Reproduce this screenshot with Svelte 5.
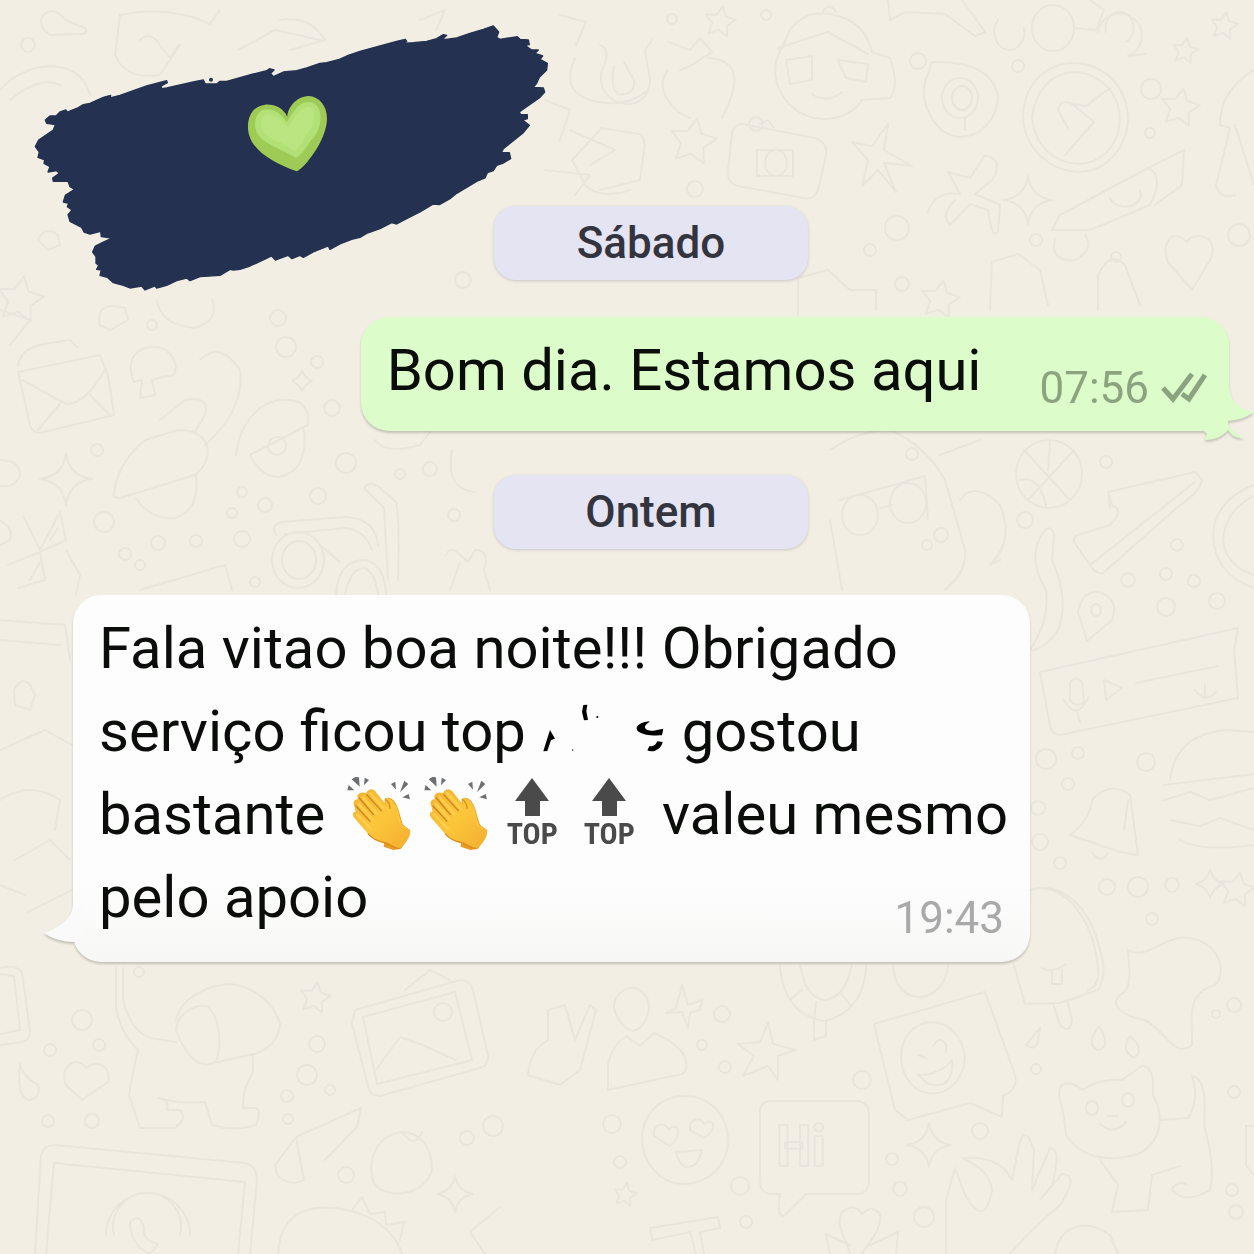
<script>
  const bubbles = [
    [82, 1020, 10], [50, 1050, 6], [99, 1045, 6], [48, 1121, 6], [92, 1121, 7], [287, 1096, 6], [307, 1075, 10],
    [330, 1090, 5], [288, 1119, 5], [346, 1175, 8], [467, 1138, 7], [493, 1126, 10], [317, 1044, 8], [139, 972, 5],
    [722, 1014, 8], [702, 1045, 5], [725, 1067, 6], [862, 1080, 9], [612, 1124, 9], [620, 1162, 6], [740, 1186, 9],
    [892, 1159, 6], [900, 1189, 7], [980, 1131, 8], [924, 1217, 10], [746, 1222, 6], [1216, 1014, 4], [1234, 1005, 7],
    [1036, 1069, 5], [1234, 1092, 6], [1232, 1190, 6], [1236, 1212, 7], [1152, 919, 6], [1138, 887, 10], [1107, 887, 8],
    [1046, 759, 10], [1078, 753, 6], [1146, 762, 9], [1068, 784, 6], [1038, 808, 7], [1040, 842, 8], [1060, 863, 6],
    [1172, 885, 7], [1106, 462, 6], [1025, 520, 8], [1177, 545, 6], [1128, 580, 7], [1166, 574, 6], [1194, 581, 6],
    [1166, 607, 9], [1217, 601, 8], [941, 535, 7], [927, 545, 5], [912, 454, 6], [104, 522, 10], [125, 554, 6],
    [158, 543, 7], [196, 541, 6], [242, 539, 8], [265, 505, 7], [232, 513, 5], [318, 496, 8], [346, 463, 10],
    [332, 408, 8], [317, 362, 6], [430, 469, 7], [400, 474, 5], [454, 515, 6], [97, 450, 6], [278, 318, 8],
    [152, 325, 5], [242, 492, 5], [286, 347, 10], [918, 61, 8], [1018, 66, 6], [1151, 89, 10], [756, 124, 7],
    [672, 19, 5], [766, 15, 5], [897, 228, 12], [1239, 235, 11], [1036, 240, 6], [1116, 257, 5], [902, 284, 7],
    [870, 250, 6], [1150, 133, 5], [463, 280, 8], [28, 45, 7], [695, 189, 8], [140, 565, 5], [255, 582, 5],
  ];

  const stars = [
    [315, 998, 16], [1237, 890, 18], [720, 22, 16], [1224, 26, 14], [1185, 51, 13], [1180, 108, 20], [693, 142, 24],
    [793, 245, 15], [625, 1195, 12], [20, 300, 24], [940, 300, 20],
  ];

  const sparkles = [
    [66, 479, 26], [1028, 200, 24], [929, 1145, 22], [455, 1194, 18], [1210, 884, 14], [302, 381, 10],
  ];

  const doodles = [
    // elephant
    "M116 968V1005Q118 1030 138 1050Q132 1075 129 1095L140 1128H175Q188 1118 180 1110L167 1110Q170 1100 158 1098M158 1098Q180 1104 205 1102L212 1125Q235 1132 256 1125Q262 1112 256 1108L243 1108Q242 1090 253 1072V1055M123 968V1000Q130 1030 150 1038L176 1042M176 1020C180 1000 205 985 230 984C255 986 275 1005 280 1024C278 1045 262 1052 254 1054L218 1062M176 1030C178 1012 195 1004 207 1006C220 1016 222 1045 216 1062C200 1070 186 1058 176 1030",
    // picture frame
    "M355 1010L460 980Q470 980 473 990L488 1056Q488 1066 480 1068L380 1096Q370 1096 368 1086L352 1024ZM363 1017L455 992L472 1060L377 1084ZM376 1070L400 1037L420 1044L456 1060M434 1012a9 9 0 1 0 18 0a9 9 0 1 0-18 0M405 990L430 970L450 980",
    // monitor with a phone badge
    "M35 1254L41 1155Q44 1145 55 1145L245 1163Q257 1166 257 1180L250 1254M46 1254L54 1163L245 1182L238 1254M106 1235a42 42 0 1 1 84 0M114 1235a34 34 0 1 1 66 0M130 1222Q140 1212 144 1228Q142 1240 158 1244L150 1254Q130 1245 130 1222",
    "M0 968Q15 964 22 972L30 1032Q30 1040 22 1042L0 1045M0 974L14 976L20 1030L0 1034M20 1064Q22 1076 38 1085Q42 1096 30 1100Q16 1098 20 1064",
    // heart, peach, dinosaur
    "M82 1100L66 1085C58 1065 78 1055 86 1068C98 1058 112 1068 108 1082Z",
    "M402 1132C375 1135 365 1165 375 1185C390 1200 425 1195 432 1170C432 1145 418 1132 402 1132Q415 1150 422 1132",
    "M278 1254C280 1215 305 1205 335 1208C370 1212 395 1230 402 1254M352 1210L362 1197L370 1214L385 1212L386 1225L404 1222L400 1240M500 1207L470 1232L485 1254",
    "M275 1165L296 1137L361 1108L357 1127L325 1160M296 1137L304 1180Q290 1188 277 1175L275 1165",
    // balloon, cross and dove
    "M614 1005C618 985 640 982 648 1000C652 1018 640 1030 633 1031C622 1028 614 1015 614 1005ZM676 1008L682 985L688 1005L702 1000L700 1010L690 1013L688 1028L682 1012L666 1013Z",
    "M608 1090L608 1064Q612 1045 626 1036L640 1046L654 1033Q690 1048 686 1070L682 1074ZM548 1010V1040Q530 1050 528 1075L560 1085L580 1070L596 1010L590 1005L575 1040L565 1005Z",
    // starfish
    "M768 1023L773 1044L796 1050L778 1056L778 1080L768 1066L743 1076L754 1056L738 1044L760 1042Z",
    "M888 124L884 150L912 166L884 163L896 192L878 170L862 186L868 160L852 142L872 146Z",
    // life ring
    "M780 965C782 1000 800 1018 825 1021C850 1015 866 995 866 965M800 965C804 985 810 998 825 1000C840 998 848 985 852 965M790 1000L802 990M814 1021L816 1002M850 1005L840 992M814 1021V1040L826 1036V1021",
    "M893 965C895 1010 945 1005 948 965",
    // emoji cards
    "M874 1024L985 992L1015 1075Q1018 1090 1003 1096L1002 1117L970 1103L908 1120L895 1110ZM901 1059C900 1010 962 1010 965 1059C960 1105 905 1105 901 1059ZM918 1055L926 1058M934 1045Q940 1035 946 1045V1052M918 1075Q940 1075 952 1060Q954 1090 928 1084Z",
    "M642 1139C642 1115 660 1096 684 1096C710 1096 728 1115 728 1141C728 1165 708 1184 684 1184C660 1184 642 1162 642 1139ZM670 1146L654 1136C652 1122 668 1122 668 1130C678 1120 684 1134 670 1146ZM704 1138L690 1130C688 1118 702 1116 704 1124C714 1116 718 1130 704 1138ZM676 1152L702 1150Q698 1168 686 1167Q678 1164 676 1152Z",
    // speech balloon
    "M770 1101H858Q869 1103 869 1114V1182Q868 1194 856 1194H806Q796 1204 784 1216Q776 1216 780 1194H770Q760 1192 760 1182V1112Q760 1102 770 1101Z",
    // ice lolly
    "M1030 890C1060 880 1090 905 1100 950Q1108 975 1098 990L1060 1003L1025 1004L1014 965M1040 888C1075 890 1095 930 1098 970Q1100 985 1088 990M1053 1003L1060 1025Q1070 1035 1072 1020L1067 1000M1042 968Q1052 974 1066 964M1052 972V984H1062V970",
    // puddle
    "M1128 950C1145 960 1160 940 1180 938C1215 935 1230 970 1215 985C1195 990 1190 1005 1192 1025V1045C1175 1060 1165 1030 1145 1020C1120 1015 1110 1005 1120 995C1132 990 1130 970 1128 950Z",
    "M1040 1028L1026 1045Q1036 1052 1038 1040ZM1099 1026Q1085 1045 1098 1050Q1112 1048 1099 1026ZM1130 1036Q1120 1050 1134 1058Q1146 1050 1130 1036Z",
    // cat
    "M1060 1100C1055 1080 1072 1080 1082 1090Q1100 1078 1122 1080L1142 1066Q1155 1066 1153 1095C1165 1115 1162 1145 1135 1155C1110 1162 1080 1158 1066 1135Q1064 1112 1060 1100ZM1086 1108a6 7 0 1 0 12 0a6 7 0 1 0-12 0M1122 1100a6 7 0 1 0 12 0a6 7 0 1 0-12 0M1100 1124Q1114 1136 1126 1122M1108 1116H1118M1162 1120L1188 1118Q1200 1100 1192 1076Q1208 1078 1204 1125Q1216 1170 1210 1190Q1185 1205 1172 1190Q1176 1180 1186 1184M1100 1160L1118 1185L1112 1212L1148 1210L1152 1175L1180 1166",
    // hand and plant
    "M946 1254V1200L955 1168L965 1195Q985 1230 992 1190Q990 1170 962 1158Q1000 1155 1012 1180L1018 1150Q1024 1120 1034 1150L1032 1190L1050 1148Q1062 1148 1052 1185L1040 1200L1062 1174Q1080 1175 1060 1205Q1030 1230 1010 1254",
    "M850 1254C845 1235 835 1225 842 1212Q855 1202 862 1214Q872 1204 880 1214C882 1230 870 1240 862 1254M830 1254L826 1234L850 1245M870 1245L898 1232L896 1254M1055 1254C1060 1225 1085 1218 1110 1235L1118 1254M650 1228L718 1217L720 1228L700 1232L704 1254M650 1228L652 1240L690 1232L696 1254",
    "M1246 1126H1254M1246 1126V1165L1254 1175",
    // santa and teddy
    "M778 56L790 30Q805 10 830 14Q865 20 872 52L890 58Q900 85 890 98L862 100C850 120 815 128 790 105C775 90 772 70 778 56ZM778 48L828 32L868 54M786 60L812 56V80L790 84ZM838 60L868 64L866 82L846 78ZM812 94Q828 104 842 92M822 14Q828 0 836 12",
    "M600 45Q612 50 602 70C592 105 648 120 650 80L645 50L652 40M614 66Q610 88 618 94Q636 96 634 80L624 62M668 42L690 50L700 38L712 52L690 66L680 70M668 70C655 85 668 110 690 118M708 58Q745 60 730 100L722 118",
    // camera
    "M742 124L815 138Q828 142 826 155L818 190Q814 200 804 198L738 186Q726 182 728 170L732 132Q735 124 742 124ZM757 150H793V176H757ZM765 163a11 13 0 1 0 22 0a11 13 0 1 0-22 0M760 124L768 120L774 128",
    "M600 128L640 134Q646 138 644 150L640 180L600 190M570 130L615 150L590 165",
    // donut
    "M932 62Q990 60 998 95C998 120 980 137 960 137C935 135 920 105 925 82ZM942 98a18 20 0 1 0 36 0a18 20 0 1 0-36 0M952 98a10 12 0 1 0 20 0a10 12 0 1 0-20 0M965 118V130",
    // clock
    "M1023 118C1023 85 1045 63 1075 63C1108 65 1128 90 1128 120C1126 150 1105 172 1078 172C1048 170 1025 148 1023 118ZM1032 118C1035 90 1052 72 1076 72C1102 74 1120 95 1120 120C1118 148 1100 164 1077 164C1052 162 1035 145 1032 118ZM1058 110Q1060 98 1072 104L1086 106L1110 88M1072 104L1094 122L1065 155M1058 110L1068 128",
    // binoculars and snail
    "M998 20a15 18 0 1 0 26 8M1032 28a20 22 0 1 0 42 0a20 22 0 1 0-42 0M1074 28L1096 30L1104 10L1090 0M1098 32a22 22 0 1 1 30 24L1145 54M1106 32a14 16 0 1 1 20 10M888 0L890 20L905 12L945 14L975 36L985 32L962 0",
    // palm and rocket
    "M928 212Q935 190 960 194L948 172L970 178L985 155Q1005 160 992 180L975 194L1000 205L998 232Q992 240 988 210L970 204L950 225Q940 215 955 200",
    "M1052 230L1060 215L1148 168Q1165 175 1150 205L1090 230ZM1148 168L1184 150L1182 185L1155 205M1110 198a15 12 0 1 0 30-8M1055 240Q1050 262 1075 260Q1095 250 1085 235",
    "M1254 70Q1220 90 1220 125L1230 128L1216 185Q1220 200 1235 195M1235 125L1254 185M1192 290L1168 262C1160 240 1175 228 1186 242C1200 228 1220 240 1210 260Z",
    "M990 310L992 262L1018 254L1040 270L1048 305M1098 310V275Q1110 250 1125 265L1140 305M798 315V278L828 270L850 290H876V310",
    // upper left doodles
    "M42 16Q55 5 65 20L85 28Q90 35 76 34L50 35Q38 28 42 16ZM120 15Q170 5 210 24L220 10M120 15L115 55Q125 80 160 75L180 45M140 40Q150 30 160 45L170 58L178 45M0 90C25 60 80 55 90 95M10 100Q40 75 60 85",
    "M280 20Q310 15 325 40L290 50M238 50L275 30L320 40M420 20L445 10L436 30M560 15L586 22L576 45M545 100L570 110L560 140M545 170L590 175L575 195",
    "M575 58Q560 90 590 100Q625 110 648 90M600 130L572 160L585 185Q600 200 630 190",
    "M38 240Q45 225 58 235L60 245L48 250ZM0 310L30 320L10 345M100 325Q95 300 125 308L128 320L110 330ZM157 300Q160 325 195 328Q220 320 212 300",
    // envelope
    "M18 366Q20 348 45 344L70 340L78 348M18 372L100 355L108 375L114 415L40 433Q32 432 30 425ZM22 380L66 404Q85 405 106 368M38 430L60 404M110 415L90 395",
    // mushroom
    "M134 382Q125 360 140 350Q165 340 175 362Q178 378 166 376L152 380L155 395L140 398L142 380Z",
    // planets and lamps
    "M114 493Q118 462 145 440L178 430Q205 430 208 450Q208 465 195 475L120 498Q112 498 114 493ZM136 498Q150 520 175 518Q200 510 196 476M160 420L185 400Q210 395 205 415L195 432M200 360Q220 340 240 370Q245 410 205 445M236 455C240 420 262 398 290 400Q310 402 308 425L250 455Q262 478 280 477Q308 470 304 430M268 446a9 9 0 1 0 18 0a9 9 0 1 0-18 0",
    // scissors
    "M24 517L40 550L60 512M60 512L66 540L40 552L8 565M40 552L45 580L18 588M50 540L58 528M30 580L40 562M66 550L80 575L76 595M0 460Q20 460 20 475Q16 488 0 486M0 521Q14 528 10 540L0 545",
    // goggles
    "M276 535Q270 525 282 522L345 517Q375 518 378 545M285 534L345 528Q365 530 372 550M272 560a26 28 0 1 0 52 0a26 28 0 1 0-52 0M282 560a17 19 0 1 0 34 0a17 19 0 1 0-34 0M320 545L340 562M336 595Q338 560 365 560Q385 564 386 595M345 595Q350 568 365 568Q376 574 378 595M364 488Q370 480 380 488L396 502Q400 520 398 580M364 488L384 508L388 580",
    "M140 590L225 565L232 590M375 440Q385 455 420 445L430 432M452 450Q445 490 475 492M446 555Q450 545 460 555L468 562L475 550Q490 550 484 570L490 590M460 562L450 590",
    // animal with glasses
    "M830 450Q860 430 890 430Q925 445 945 480L965 550Q968 570 945 590M840 500L925 476L928 520M842 515a18 20 0 1 0 36 0a18 20 0 1 0-36 0M890 503a18 20 0 1 0 36 0a18 20 0 1 0-36 0M880 508L892 505M830 520L842 590M940 455L980 440M960 500Q975 480 1000 505Q1015 540 990 565L1000 560",
    // basketball
    "M1016 474a33 34 0 1 0 66 0a33 34 0 1 0-66 0M1024 450L1070 500M1028 500L1074 450M1050 442L1048 470M1020 480Q1040 475 1046 506",
    // shoe
    "M1108 492L1195 472L1202 480Q1200 492 1180 505L1103 573Q1096 575 1090 565L1074 542Q1072 535 1085 533L1110 525Q1125 510 1112 505ZM1090 565L1195 482M1108 492L1110 508",
    "M1254 485Q1215 500 1213 535Q1215 575 1254 588M1254 496Q1225 510 1223 540Q1225 565 1254 575M1045 530Q1052 525 1054 535L1052 560Q1070 600 1058 630Q1045 650 1030 650Q1050 620 1046 590Q1025 555 1045 530ZM1087 641L1078 612Q1082 590 1100 592Q1120 600 1112 620ZM1091 610a5 6 0 1 0 10 0a5 6 0 1 0-10 0",
    // voice message
    "M1040 672L1238 628L1234 650L1238 698L1060 735Q1052 735 1050 725ZM1070 682Q1076 675 1082 682L1084 702Q1076 708 1070 700ZM1064 700Q1076 722 1088 698M1077 712L1080 722M1104 680L1122 688L1106 700ZM1136 683L1218 666M1205 684V698M1195 690Q1205 704 1216 692",
    // burger and bell
    "M1170 780Q1175 735 1225 730L1254 732M1164 785L1254 774M1164 800L1190 792L1210 800L1254 788M1170 820L1200 826L1220 818L1254 830M1180 840Q1200 852 1254 845M1070 835Q1090 820 1092 800Q1110 780 1130 795L1138 855L1120 852ZM1092 852Q1100 865 1108 853M1128 800L1124 830",
    // left column
    "M0 620L65 625L70 660M0 640L60 645M14 690Q25 670 35 695L30 710L15 705ZM0 750L45 730L72 745M0 800Q30 780 60 800L55 830M15 860L50 840L70 860M0 885L25 895M28 912L72 890",
  ];

  function starPath([x, y, r]) {
    const points = [];
    for (let i = 0; i < 10; i++) {
      const radius = i % 2 ? r * 0.5 : r;
      const angle = (i * Math.PI) / 5 - 1.4;
      points.push(`${(x + radius * Math.cos(angle)).toFixed(1)} ${(y + radius * Math.sin(angle)).toFixed(1)}`);
    }
    return `M${points.join("L")}Z`;
  }

  function sparklePath([x, y, r]) {
    return `M${x} ${y - r}Q${x + 3} ${y - 3} ${x + r} ${y}Q${x + 3} ${y + 3} ${x} ${y + r}Q${x - 3} ${y + 3} ${x - r} ${y}Q${x - 3} ${y - 3} ${x} ${y - r}Z`;
  }
</script>

{#snippet clap()}
  <svg class="emoji" viewBox="14 252 231 222" role="img" aria-label="👏">
    <defs>
      <linearGradient id="skin" x1="0" y1="0" x2="1" y2="1">
        <stop offset="0" stop-color="#f3b233" />
        <stop offset="0.5" stop-color="#fcc63a" />
        <stop offset="1" stop-color="#f3ad30" />
      </linearGradient>
    </defs>
    <g fill="#6d6f72">
      <path d="M36 295L40 279L57 295ZM49 262L60 255L71 256L73 284ZM88 257L101 264L86 280ZM167 276L180 269L182 293ZM207 266L219 276L194 301ZM201 316L220 306L224 322Z" />
    </g>
    <path
      d="M148 322C158 313 171 318 181 334C192 354 196 380 203 398L224 415L222 432L197 470L174 474L145 464L148 440Z"
      fill="#e99a22"
    />
    <path
      d="M149 320C160 314 172 322 182 340C192 360 193 383 201 400L216 408L200 436L160 400Z"
      fill="#fbc53a"
    />
    <path
      d="M66 311C72 300 84 300 92 304C99 289 112 288 120 298L157 344C163 345 160 330 151 320C166 316 176 341 180 356C186 374 191 390 197 403L225 414C224 438 210 457 193 470C175 470 164 456 151 453C132 450 112 442 98 425L58 379C50 368 52 358 61 359L58 344C50 333 58 320 67 322Z"
      fill="url(#skin)"
    />
    <path
      d="M105 304L148 352M82 316L126 366M70 336L112 382M66 368L106 410"
      fill="none"
      stroke="#ffce4a"
      stroke-width="8"
      stroke-linecap="round"
    />
    <path
      d="M94 308L138 356M72 318L114 368M62 342L104 388"
      fill="none"
      stroke="#c88420"
      stroke-width="4"
      stroke-linecap="round"
    />
    <path
      d="M98 425C112 442 132 450 151 453C164 456 175 470 193 470"
      fill="none"
      stroke="#dc8c1d"
      stroke-width="4"
    />
    <path d="M150 322Q164 333 164 350" fill="none" stroke="#d68b20" stroke-width="4" />
  </svg>
{/snippet}

{#snippet topArrow()}
  <span class="emoji top">
    <svg class="arrow" viewBox="0 0 34 38" aria-hidden="true">
      <path d="M17 0L34 23H25V38H10V23H0Z" />
    </svg>
    <span class="top-label">TOP</span>
  </span>
{/snippet}

<main class="chat">
  <svg class="wallpaper" viewBox="0 0 1254 1254" preserveAspectRatio="xMidYMid slice" aria-hidden="true">
    {#each doodles as d}
      <path {d} />
    {/each}
    {#each stars as star}
      <path d={starPath(star)} />
    {/each}
    {#each sparkles as sparkle}
      <path d={sparklePath(sparkle)} />
    {/each}
    {#each bubbles as [cx, cy, r]}
      <circle {cx} {cy} {r} />
    {/each}
    <text class="hi" x="776" y="1166">Hi</text>
  </svg>

  <svg class="brush" viewBox="0 0 1620 900" role="img" aria-label="💚">
    <path
      fill="#243150"
      stroke="#243150"
      stroke-width="4"
      stroke-linejoin="round"
      d="M76 330L90 318 108 318 120 306 138 300 142 306 175 293 190 284 210 280 250 262 272 256 270 264 300 256 380 228 440 212 442 218 424 228 424 236 440 234 520 216 550 210 556 222 590 222 600 214 620 214 700 192 740 182 748 176 762 180 752 190 760 200 790 186 830 182 860 174 900 160 920 158 958 148 980 138 1020 124 1080 108 1130 94 1156 88 1160 94 1146 100 1180 98 1220 94 1250 86 1270 74 1280 76 1266 90 1310 84 1350 70 1390 58 1420 48 1436 66 1430 82 1440 88 1492 80 1500 88 1525 90 1528 104 1515 106 1535 120 1555 120 1545 130 1568 138 1560 148 1582 160 1580 180 1558 202 1550 220 1540 232 1570 234 1574 246 1560 262 1520 290 1498 306 1502 314 1522 314 1522 326 1508 330 1528 346 1510 368 1480 392 1450 416 1444 428 1468 428 1472 446 1448 460 1430 466 1420 482 1402 488 1395 504 1370 514 1340 532 1310 550 1290 566 1258 584 1240 582 1200 606 1160 626 1130 642 1115 638 1080 656 1040 670 1020 682 995 688 960 702 930 718 925 708 880 726 850 742 840 736 816 746 804 736 766 750 755 738 730 750 690 768 660 778 640 780 630 778 600 796 540 800 510 812 500 804 470 812 440 826 410 834 405 828 375 840 365 828 330 834 310 826 280 818 262 802 240 796 244 780 230 778 236 766 228 760 228 740 218 726 226 708 250 696 276 684 244 680 242 664 210 672 192 666 185 652 150 634 144 614 156 600 142 590 146 580 130 576 136 556 164 538 150 530 144 514 100 514 98 504 118 490 110 482 84 486 90 470 72 460 74 450 54 442 58 426 46 410 56 390 100 360 106 344 80 340Z"
    />
    <circle cx="573" cy="209" r="6" fill="#243150" />
    <path
      fill="#9dcb56"
      d="M802 320C790 295 765 282 735 284C700 288 682 318 684 356C688 420 760 458 830 484C850 476 905 410 918 350C930 300 905 260 865 258C830 260 804 290 802 320Z"
    />
    <path
      fill="#b1e176"
      d="M800 336C786 314 765 296 735 298C710 302 700 334 708 362C720 400 790 418 828 444C852 430 864 400 886 376C908 340 910 286 872 276C832 274 822 306 800 336Z"
    />
    <path
      fill="#b9e681"
      d="M802 352C786 332 766 312 740 312C722 318 720 344 728 360C744 390 794 396 824 424C844 406 850 386 868 362C888 334 890 300 868 290C840 290 826 322 802 352Z"
    />
  </svg>

  <time class="day">Sábado</time>

  <article class="message sent">
    <p class="text">Bom dia. Estamos aqui</p>
    <footer class="meta">
      <time>07:56</time>
      <svg class="ticks" viewBox="0 0 46 30" aria-label="Lida" role="img">
        <path d="M2 15L12 26L31 1M21 21L28 26L44 2" />
      </svg>
    </footer>
    <svg class="tail tail-sent" viewBox="0 0 52 60" aria-hidden="true">
      <path d="M24 4L27 4C27 18 34 29 52 32C44 38 36 40 26 41C25 47 31 52 42 58C34 58 30 56 26 50C20 57 12 60 3 60L5 54L1 50L10 30Z" />
    </svg>
  </article>

  <time class="day">Ontem</time>

  <article class="message received">
    <p class="text">
      Fala vitao boa noite!!! Obrigado serviço ficou top
      <svg class="erased" viewBox="618 30 381 165" aria-hidden="true">
        <path d="M628 184L640 183L651 150L663 146L648 120L640 145Z" />
        <path d="M748 45L760 44L757 64L762 90L750 91L744 66Z" />
        <path d="M946 94C918 96 902 110 910 122C925 134 950 138 984 136L988 116L958 122C938 124 920 112 946 96Z" />
        <path d="M986 156C982 178 956 190 940 181L946 169C962 170 966 162 970 154Z" />
        <circle cx="790" cy="81" r="3" />
        <circle cx="716" cy="180" r="2" />
      </svg>
      gostou bastante
      <span class="emojis">{@render clap()}{@render clap()}{@render topArrow()}{@render topArrow()}</span>
      valeu mesmo pelo apoio
    </p>
    <footer class="meta"><time>19:43</time></footer>
    <svg class="tail tail-received" viewBox="0 0 48 40" aria-hidden="true">
      <path d="M29 0C28 14 16 22 0 28C8 34 20 37 31 37L40 30V0Z" />
    </svg>
  </article>
</main>

<style>
  :global(body) {
    margin: 0;
    background: #f2eee4;
  }

  .chat {
    position: relative;
    box-sizing: border-box;
    min-height: 100vh;
    padding: 206px 0 48px 48px;
    display: flex;
    flex-direction: column;
    overflow: hidden;
    font-family: Roboto, "Liberation Sans", sans-serif;
    color: #0b0d0b;
  }

  .wallpaper {
    position: absolute;
    inset: 0;
    width: 100%;
    height: 100%;
    fill: none;
    stroke: #eae5dc;
    stroke-width: 2;
    stroke-linejoin: round;
    stroke-linecap: round;
  }

  .hi {
    font-family: "Liberation Sans Narrow", "Roboto Condensed", Roboto, sans-serif;
    font-size: 58px;
    font-weight: 700;
  }

  .brush {
    position: absolute;
    top: 10px;
    left: 20px;
    width: 540px;
    height: 300px;
  }

  .day {
    position: relative;
    align-self: center;
    width: 314px;
    border-radius: 22px;
    background: #e5e4f3;
    box-shadow: 0 1px 3px rgba(80, 80, 100, 0.25);
    color: #34343f;
    font-size: 44px;
    font-weight: 500;
    line-height: 74px;
    text-align: center;
  }

  .message {
    position: relative;
    box-sizing: border-box;
    margin: 0 25px;
    border-radius: 28px;
    filter: drop-shadow(0 2px 1px rgba(60, 60, 50, 0.25));
  }

  .text {
    margin: 0;
    font-size: 58px;
    line-height: 83px;
  }

  .meta {
    display: flex;
    align-items: center;
    gap: 12px;
    font-size: 44px;
    line-height: 48px;
  }

  .sent {
    align-self: flex-end;
    display: flex;
    align-items: flex-end;
    justify-content: space-between;
    width: 72%;
    margin-top: 37px;
    margin-bottom: 44px;
    padding: 12px 22px 19px 26px;
    background: #dcfcc9;
  }

  .sent .meta {
    color: #8ba37e;
  }

  .ticks {
    width: 46px;
    height: 30px;
    fill: none;
    stroke: #8ba37e;
    stroke-width: 5;
  }

  .received {
    align-self: flex-start;
    max-width: 957px;
    margin-top: 46px;
    padding: 12px 16px 23px 26px;
    background: linear-gradient(#fdfdfd 78%, #f7f7f6);
  }

  .received .meta {
    position: absolute;
    right: 26px;
    bottom: 20px;
    color: #a9a9a9;
  }

  .tail {
    position: absolute;
  }

  .tail-sent {
    right: -25px;
    bottom: -9px;
    width: 52px;
    height: 60px;
    fill: #dcfcc9;
  }

  .tail-received {
    left: -29px;
    bottom: 17px;
    width: 48px;
    height: 40px;
    fill: #fafafa;
  }

  .erased {
    width: 127px;
    height: 55px;
    vertical-align: -4px;
  }

  .emojis {
    display: inline-flex;
    vertical-align: -16px;
  }

  .emoji {
    width: 77px;
    height: 74px;
  }

  .top {
    display: flex;
    flex-direction: column;
    align-items: center;
    gap: 2px;
    color: #4a4a4b;
  }

  .arrow {
    width: 34px;
    height: 38px;
    padding-top: 2px;
    fill: currentColor;
  }

  .top-label {
    font-family: "Liberation Sans Narrow", "Roboto Condensed", Roboto, sans-serif;
    font-size: 30px;
    font-weight: 700;
    line-height: 32px;
  }
</style>
